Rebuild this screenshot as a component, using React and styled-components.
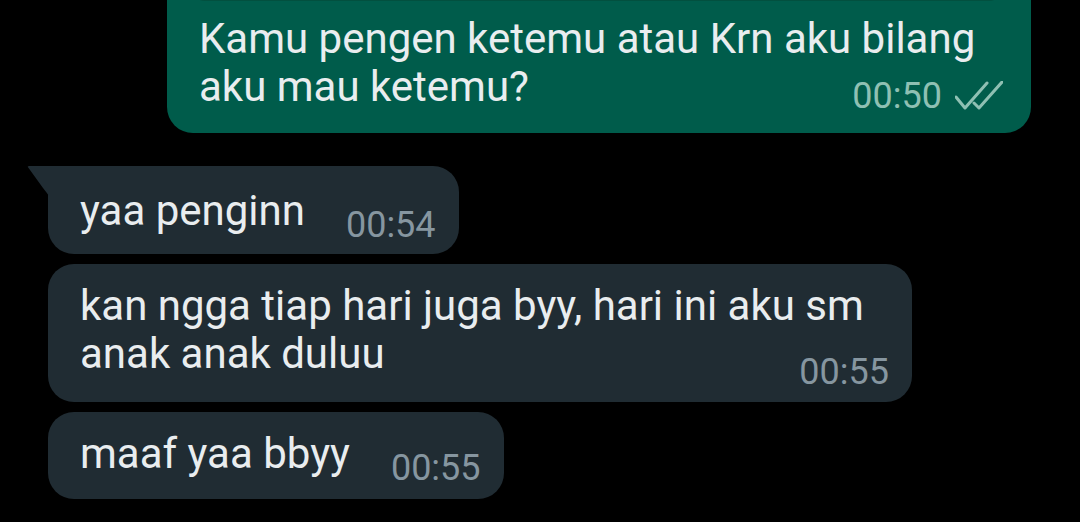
import React from "react";
import styled, { createGlobalStyle } from "styled-components";

const GlobalStyle = createGlobalStyle`
  html, body {
    margin: 0;
    padding: 0;
    background: #000;
    overflow: hidden;
  }
  body {
    font-family: Roboto, "Noto Sans", sans-serif;
  }
`;

const Colors = {
  OUT_BG: "#005c4b",
  OUT_QUOTE: "#02503f",
  IN_BG: "#202c33",
  TEXT: "#e9edef",
  OUT_META: "#8fc0b3",
  IN_META: "#8696a0",
};

const ChatFrame = styled.div`
  width: 1080px;
  height: 522px;
  overflow: hidden;
  background: #000;
`;

const MessageList = styled.div`
  display: flex;
  flex-direction: column;
  align-items: flex-start;
  gap: 10px;
  padding: 0 49px 0 48px;
`;

const Bubble = styled.div`
  position: relative;
  box-sizing: border-box;
  max-width: 864px;
  display: flex;
  flex-direction: ${({ $stacked }) => ($stacked ? "column" : "row")};
  align-items: ${({ $stacked }) => ($stacked ? "stretch" : "flex-end")};
  gap: ${({ $stacked }) => ($stacked ? "0" : "41px")};
  padding: 18px 23px ${({ $stacked }) => ($stacked ? "12px" : "21px")} 32px;
  border-radius: 26px;
  background: ${Colors.IN_BG};
  color: ${Colors.TEXT};

  ${({ $tail }) =>
    $tail && "border-top-left-radius: 0; padding-top: 21px; padding-bottom: 19px;"}
`;

const OutBubble = styled(Bubble)`
  align-self: flex-end;
  margin-top: -64px;
  margin-bottom: 23px;
  padding: 8px 28px 19px 24px;
  background: ${Colors.OUT_BG};
`;

// bottom edge of the quoted reply, the rest is scrolled off
const Quote = styled.div`
  height: 57px;
  border-radius: 14px;
  background: ${Colors.OUT_QUOTE};
`;

const Text = styled.div`
  font-size: 42px;
  line-height: 48px;
  white-space: pre-wrap;
  ${({ $indent }) => $indent && `margin: 14px 0 0 ${$indent}px;`}
`;

const Meta = styled.div`
  display: flex;
  align-items: center;
  gap: 13px;
  flex-shrink: 0;
  font-size: 36px;
  line-height: 36px;
  color: ${({ $out }) => ($out ? Colors.OUT_META : Colors.IN_META)};
  ${({ $stacked, $lift }) =>
    $stacked
      ? `align-self: flex-end; margin-top: -${$lift}px;`
      : "margin-bottom: -8px;"}
`;

const Tail = styled.svg`
  position: absolute;
  top: 0;
  left: -21px;
  width: 22px;
  height: 30px;
`;

const DoubleCheck = ({ color }) => (
  <svg width="48" height="30" viewBox="0 0 48 30" fill="none">
    <path
      d="M1 16 L10 27 L32 2 M19 22 L24 27 L47 1"
      stroke={color}
      strokeWidth="3"
      strokeLinecap="round"
      strokeLinejoin="round"
    />
  </svg>
);

const Incoming = ({ text, time, tail, stacked, lift }) => (
  <Bubble $tail={tail} $stacked={stacked}>
    {tail && (
      <Tail viewBox="0 0 22 30">
        <path
          d="M22 0 L2 0 Q0 0 1.2 1.6 L16 22 Q20 27 22 30 Z"
          fill={Colors.IN_BG}
        />
      </Tail>
    )}
    <Text>{text}</Text>
    <Meta $stacked={stacked} $lift={lift}>
      {time}
    </Meta>
  </Bubble>
);

const App = () => (
  <ChatFrame>
    <GlobalStyle />
    <MessageList>
      <OutBubble $stacked>
        <Quote />
        <Text $indent={8}>Kamu pengen ketemu atau Krn aku bilang aku mau ketemu?</Text>
        <Meta $out $stacked $lift={33}>
          00:50
          <DoubleCheck color={Colors.OUT_META} />
        </Meta>
      </OutBubble>
      <Incoming tail text="yaa penginn" time="00:54" />
      <Incoming
        stacked
        lift={24}
        text="kan ngga tiap hari juga byy, hari ini aku sm anak anak duluu"
        time="00:55"
      />
      <Incoming text="maaf yaa bbyy" time="00:55" />
    </MessageList>
  </ChatFrame>
);

export default App;
